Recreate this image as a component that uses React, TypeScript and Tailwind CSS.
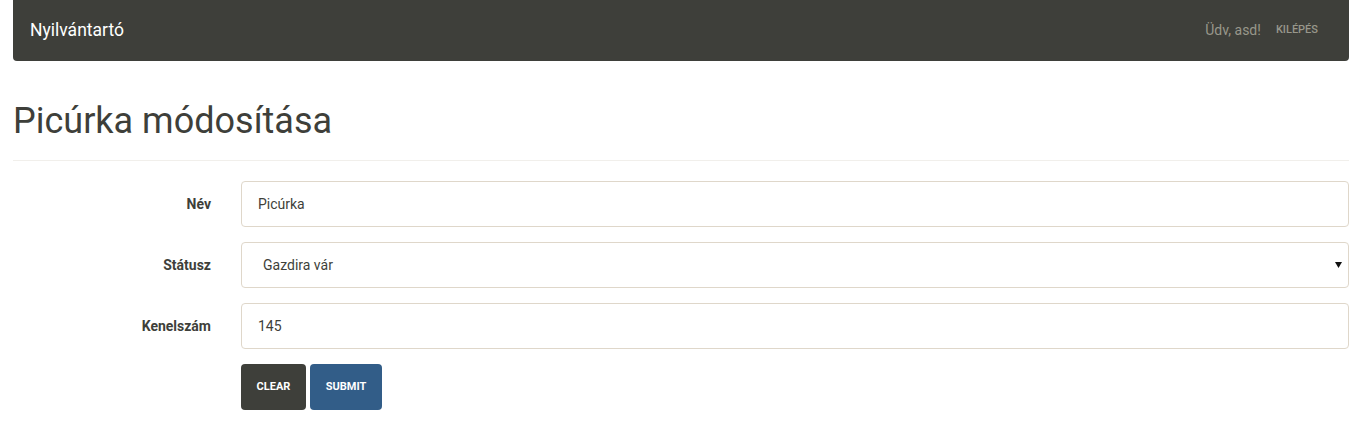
import React from "react";

export default function App() {
  const font = { fontFamily: "Roboto, 'Liberation Sans', sans-serif" };
  return (
    <div className="min-h-[440px] bg-white text-[#3e3f3a]" style={font}>
      <div className="pl-[13px] pr-[10px]">
        <nav className="h-[61px] bg-[#3e3f3a] rounded-b-[4px] flex items-center justify-between pl-[17px] pr-[31px]">
          <span className="text-[17.5px] text-white">Nyilvántartó</span>
          <div className="flex items-center">
            <span className="text-[14px] text-[#98978b]">Üdv, asd!</span>
            <span className="ml-[15px] text-[11px] font-medium text-[#98978b] uppercase">Kilépés</span>
          </div>
        </nav>

        <h1 className="mt-[40px] text-[36px] leading-[40px] font-normal pb-[19px] border-b border-[#f1efeb]">
          Picúrka módosítása
        </h1>

        <form className="mt-[20px] flex flex-col gap-[15px]">
          <div className="flex items-center">
            <label className="w-[198px] text-right text-[14px] font-bold">Név</label>
            <div className="ml-[30px] flex-1 h-[46px] border border-[#dfd7ca] rounded-[4px] flex items-center px-[16px] text-[14px]">
              Picúrka
            </div>
          </div>
          <div className="flex items-center">
            <label className="w-[198px] text-right text-[14px] font-bold">Státusz</label>
            <div className="ml-[30px] flex-1 h-[46px] border border-[#dfd7ca] rounded-[4px] flex items-center justify-between pl-[21px] pr-[6px] text-[14px]">
              <span>Gazdira vár</span>
              <svg width="7" height="6" viewBox="0 0 7 6">
                <polygon points="0,0 7,0 3.5,6" fill="#111" />
              </svg>
            </div>
          </div>
          <div className="flex items-center">
            <label className="w-[198px] text-right text-[14px] font-bold">Kenelszám</label>
            <div className="ml-[30px] flex-1 h-[46px] border border-[#dfd7ca] rounded-[4px] flex items-center px-[16px] text-[14px]">
              145
            </div>
          </div>
          <div className="flex ml-[228px] gap-[4px]">
            <button type="button" className="h-[46px] w-[65px] rounded-[4px] bg-[#3e3f3a] text-white text-[11px] font-bold uppercase">
              Clear
            </button>
            <button type="button" className="h-[46px] w-[72px] rounded-[4px] bg-[#325d88] text-white text-[11px] font-bold uppercase">
              Submit
            </button>
          </div>
        </form>
      </div>
    </div>
  );
}
